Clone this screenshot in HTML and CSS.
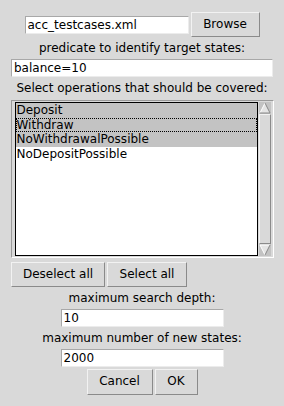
FILE: index.html
```html
<!DOCTYPE html>
<html>
<head>
<meta charset="utf-8">
<link rel="stylesheet" href="styles.css">
</head>
<body>
<div class="dialog">
  <div class="row file-row">
    <div class="entry entry-file">acc_testcases.xml</div>
    <div class="btn btn-browse">Browse</div>
  </div>
  <div class="label lbl-pred">predicate to identify target states:</div>
  <div class="entry entry-wide">balance=10</div>
  <div class="label lbl-ops">Select operations that should be covered:</div>
  <div class="listframe">
    <div class="listbox">
      <div class="item sel">Deposit</div>
      <div class="item sel active">Withdraw</div>
      <div class="item sel">NoWithdrawalPossible</div>
      <div class="item">NoDepositPossible</div>
    </div>
    <div class="scrollbar">
      <svg class="arrow" width="12" height="12" viewBox="0 0 12 12">
        <polygon points="6,1 11,11 1,11" fill="#e4e4e4"/>
        <polyline points="1,11 6,1" stroke="#ffffff" stroke-width="1" fill="none"/>
        <polyline points="6,1 11,11 1,11" stroke="#8a8a8a" stroke-width="1" fill="none"/>
      </svg>
      <div class="slider"></div>
      <svg class="arrow" width="12" height="12" viewBox="0 0 12 12">
        <polygon points="1,1 11,1 6,11" fill="#e4e4e4"/>
        <polyline points="6,11 1,1 11,1" stroke="#ffffff" stroke-width="1" fill="none"/>
        <polyline points="11,1 6,11" stroke="#8a8a8a" stroke-width="1" fill="none"/>
      </svg>
    </div>
  </div>
  <div class="row sel-row">
    <div class="btn btn-desel">Deselect all</div>
    <div class="btn btn-selall">Select all</div>
  </div>
  <div class="label lbl-depth">maximum search depth:</div>
  <div class="entry entry-num">10</div>
  <div class="label lbl-states">maximum number of new states:</div>
  <div class="entry entry-num">2000</div>
  <div class="row ok-row">
    <div class="btn btn-cancel">Cancel</div>
    <div class="btn btn-ok">OK</div>
  </div>
</div>
</body>
</html>
```

FILE: styles.css
```css
html, body {
  margin: 0;
  padding: 0;
  background: #d9d9d9;
}
body {
  width: 284px;
  height: 406px;
  overflow: hidden;
  font-family: "DejaVu Sans", sans-serif;
  font-size: 12px;
  color: #000;
}
.dialog {
  display: flex;
  flex-direction: column;
  align-items: center;
  padding-top: 12px;
}
.row {
  display: flex;
  align-items: center;
  gap: 2px;
}
.label {
  height: 15px;
  line-height: 15px;
  white-space: nowrap;
}
.entry {
  box-sizing: border-box;
  height: 18px;
  line-height: 16px;
  background: #fff;
  border: 1px solid;
  border-color: #a8a8a8 #ececec #ececec #a8a8a8;
  padding-left: 2px;
  white-space: nowrap;
}
.btn {
  box-sizing: border-box;
  height: 25px;
  line-height: 23px;
  text-align: center;
  background: #d9d9d9;
  border: 1px solid;
  border-color: #f2f2f2 #8a8a8a #8a8a8a #f2f2f2;
  white-space: nowrap;
}
.entry-file { width: 164px; }
.btn-browse { width: 69px; }
.lbl-pred { margin-top: 4px; }
.entry-wide { width: 262px; margin-top: 3px; margin-left: 0; }
.lbl-ops { margin-top: 4px; }
.listframe {
  box-sizing: border-box;
  width: 263px;
  height: 158px;
  margin-top: 4px;
  border: 1px solid;
  border-color: #9a9a9a #ffffff #ffffff #9a9a9a;
  padding: 1px 2px 1px 3px;
  display: flex;
  gap: 1px;
}
.listbox {
  box-sizing: border-box;
  width: 243px;
  height: 154px;
  background: #fff;
  border: 1px solid #000;
  padding-top: 0;
}
.item {
  height: 14.7px;
  line-height: 14.7px;
  padding-left: 1px;
  white-space: nowrap;
}
.item.sel { background: #c3c3c3; }
.item.active {
  outline: 1px dotted #000;
  outline-offset: -1px;
}
.scrollbar {
  width: 12px;
  height: 154px;
  background: #c3c3c3;
  display: flex;
  flex-direction: column;
}
.arrow { display: block; flex: none; }
.slider {
  flex: 1;
  box-sizing: border-box;
  background: #d9d9d9;
  border: 1px solid;
  border-color: #f2f2f2 #8a8a8a #8a8a8a #f2f2f2;
}
.sel-row {
  align-self: flex-start;
  margin-left: 11px;
  margin-top: 4px;
}
.btn-desel { width: 94px; }
.btn-selall { width: 80px; }
.lbl-depth { margin-top: 4px; }
.entry-num { width: 163px; margin-top: 3px; }
.lbl-states { margin-top: 4px; }
.ok-row { margin-top: 2px; }
.btn-cancel { width: 66px; height: 26px; }
.btn-ok { width: 43px; height: 26px; }
```
